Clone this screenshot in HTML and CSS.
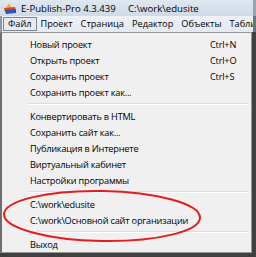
FILE: index.html
```html
<!DOCTYPE html>
<html>
<head>
<meta charset="utf-8">
<link rel="stylesheet" href="styles.css">
</head>
<body>
<div class="window">
  <div class="titlebar">
    <svg class="appicon" width="14" height="11" viewBox="0 0 14 11">
      <path d="M6 0 L9 5 L3 5 Z" fill="#f7b51c"/>
      <path d="M1 5 L12 4 L13 8 L2 9 Z" fill="#e8401e"/>
      <path d="M2 7 L13 6 L13 10 L3 11 Z" fill="#2d52c8"/>
    </svg>
    <span class="title">E-Publish-Pro 4.3.439</span>
    <span class="titlepath">C:\work\edusite</span>
  </div>
  <div class="menubar">
    <span class="mi active">Файл</span>
    <span class="mi">Проект</span>
    <span class="mi">Страница</span>
    <span class="mi">Редактор</span>
    <span class="mi">Объекты</span>
    <span class="mi">Табли</span>
  </div>
  <div class="dropdown">
    <div class="item"><span class="label">Новый проект</span><span class="key">Ctrl+N</span></div>
    <div class="item"><span class="label">Открыть проект</span><span class="key">Ctrl+O</span></div>
    <div class="item"><span class="label">Сохранить проект</span><span class="key">Ctrl+S</span></div>
    <div class="item"><span class="label">Сохранить проект как...</span></div>
    <div class="sep"></div>
    <div class="item"><span class="label">Конвертировать в HTML</span></div>
    <div class="item"><span class="label">Сохранить сайт как...</span></div>
    <div class="item"><span class="label">Публикация в Интернете</span></div>
    <div class="item"><span class="label">Виртуальный кабинет</span></div>
    <div class="item"><span class="label">Настройки программы</span></div>
    <div class="sep"></div>
    <div class="item"><span class="label">C:\work\edusite</span></div>
    <div class="item"><span class="label">C:\work\Основной сайт организации</span></div>
    <div class="sep"></div>
    <div class="item"><span class="label">Выход</span></div>
  </div>
  <svg class="annotation" width="256" height="257" viewBox="0 0 256 257">
    <ellipse cx="102" cy="216" rx="98" ry="25" transform="rotate(1 102 216)" fill="none" stroke="#e41e1e" stroke-width="2"/>
  </svg>
</div>
</body>
</html>
```

FILE: styles.css
```css
* { box-sizing: border-box; }
html, body { margin: 0; padding: 0; }
body {
  width: 256px;
  height: 257px;
  overflow: hidden;
  background: #3a3a3a;
  font-family: "Open Sans", "Noto Sans", sans-serif;
  font-size: 9.2px;
  color: #000;
}
.window {
  position: relative;
  width: 256px;
  height: 257px;
  background: #404040;
}
.titlebar {
  height: 16px;
  display: flex;
  align-items: center;
  padding-left: 3px;
  background: linear-gradient(#dfe7ef, #cfdae6);
  border-right: 3px solid #9aa3ad;
  color: #000;
  font-size: 9.6px;
}
.appicon { margin-right: 4px; flex: none; }
.title { width: 107px; white-space: nowrap; }
.titlepath { white-space: nowrap; }
.menubar {
  height: 16px;
  display: flex;
  align-items: center;
  padding-left: 1px;
  background: linear-gradient(#eef2f7, #e4eaf1);
  border-left: 2px solid #8d98a4;
  border-right: 3px solid #6c737b;
  font-size: 9.2px;
  overflow: hidden;
  white-space: nowrap;
}
.mi {
  padding: 0 3px;
  line-height: 12px;
  border: 1px solid transparent;
  flex: none;
}
.mi.active {
  padding: 0 4px;
  border-color: #7b8794;
  background: #e6ebf1;
}
.dropdown {
  width: 252px;
  height: 221px;
  background: #f0f0f0;
  border: 1px solid #979797;
  border-left: 2px solid #6e6e6e;
  padding-top: 3px;
  letter-spacing: -0.2px;
}
.item {
  height: 16px;
  display: flex;
  align-items: center;
  padding-left: 28px;
}
.label { width: 180px; white-space: nowrap; }
.key { white-space: nowrap; }
.sep {
  height: 2px;
  margin: 3px 2px 3px 26px;
  border-top: 1px solid #dcdcdc;
  border-bottom: 1px solid #ffffff;
}
.annotation {
  position: absolute;
  left: 0;
  top: 0;
  pointer-events: none;
}
```
